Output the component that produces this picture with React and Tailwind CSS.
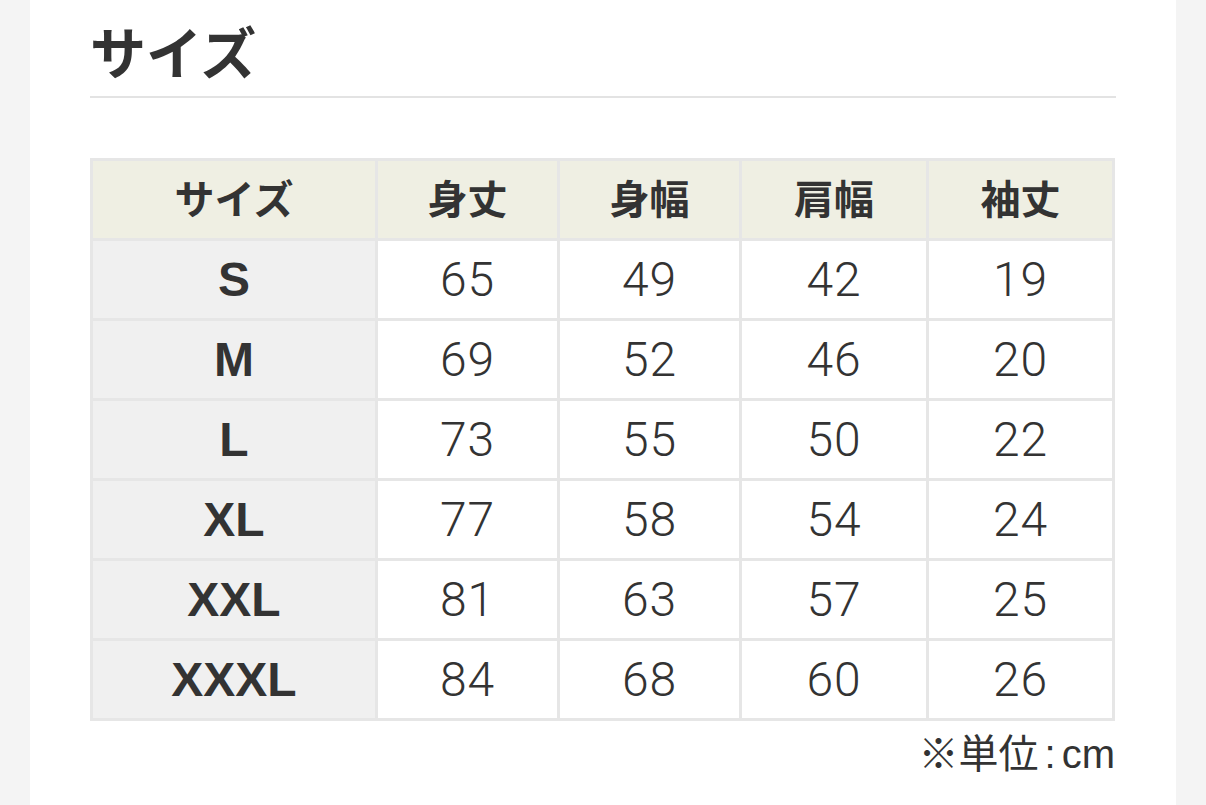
import React from 'react';

const rows = [
  ['S', 65, 49, 42, 19],
  ['M', 69, 52, 46, 20],
  ['L', 73, 55, 50, 22],
  ['XL', 77, 58, 54, 24],
  ['XXL', 81, 63, 57, 25],
  ['XXXL', 84, 68, 60, 26],
];

const headers = ['サイズ', '身丈', '身幅', '肩幅', '袖丈'];
const widths = ['w-[285px]', 'w-[182px]', 'w-[182px]', 'w-[187px]', 'w-[186px]'];

export default function App() {
  return (
    <div
      className="min-h-[805px] bg-[#f4f4f4] px-[30px] text-[#333]"
      style={{ fontFamily: '"Liberation Sans", "Noto Sans CJK JP", sans-serif' }}
    >
      <div className="min-h-[805px] bg-white px-[60px] pt-[17px]">
        {/* 見出し */}
        <h2 className="border-b-2 border-[#e3e3e3] pb-[3px] text-[56px] font-bold leading-[76px]">サイズ</h2>

        <table className="mt-[60px] w-[1025px] table-fixed border-collapse border-[3px] border-[#e6e6e6]">
          <thead>
            <tr className="h-[80px] bg-[#efefe3]">
              {headers.map((h, i) => (
                <th key={h} className={`${widths[i]} border-[3px] border-[#e6e6e6] text-[40px] font-bold`}>
                  {h}
                </th>
              ))}
            </tr>
          </thead>
          <tbody>
            {rows.map((r) => (
              <tr key={r[0]} className="h-[80px]">
                <td className="border-[3px] border-[#e6e6e6] bg-[#f0f0f0] text-center text-[48px] font-bold">{r[0]}</td>
                {r.slice(1).map((v, i) => (
                  <td
                    key={i}
                    className="border-[3px] border-[#e6e6e6] bg-white text-center text-[48px] font-light tracking-[1px]"
                    style={{ fontFamily: 'Roboto, "Liberation Sans", sans-serif' }}
                  >
                    {v}
                  </td>
                ))}
              </tr>
            ))}
          </tbody>
        </table>

        <p className="mt-[8px] w-[1025px] text-right text-[40px] leading-[50px]">
          ※単位<span className="mx-[6px]">:</span>cm
        </p>
      </div>
    </div>
  );
}
